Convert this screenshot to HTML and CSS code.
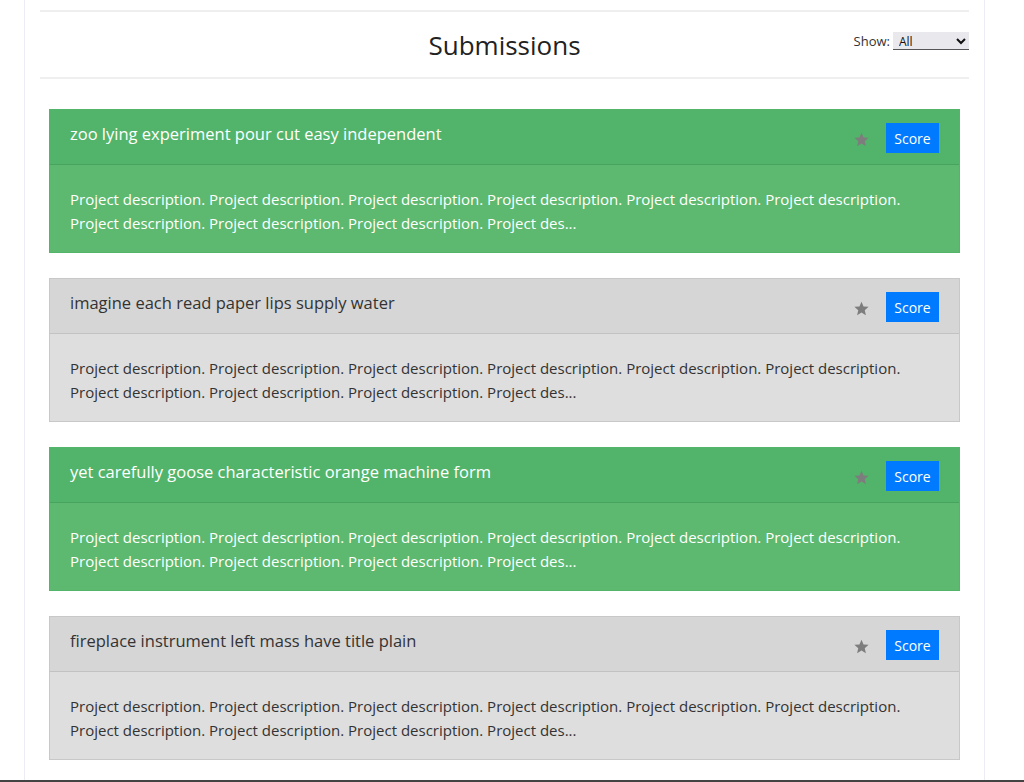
FILE: index.html
```html
<!DOCTYPE html>
<html>
<head>
<meta charset="utf-8">
<link rel="stylesheet" href="styles.css">
</head>
<body>
<div class="page">
  <div class="container">
    <div class="header">
      <h1 class="title">Submissions</h1>
      <div class="filter">
        <label for="show">Show:</label>
        <select id="show" class="select"><option>All</option></select>
      </div>
    </div>
    <div class="list">
      <div class="card green">
        <div class="card-head">
          <span class="card-title">zoo lying experiment pour cut easy independent</span>
          <div class="actions">
            <svg class="star" viewBox="0 0 24 24"><path d="M12 2.5l2.9 6.6 7.1.6-5.4 4.7 1.6 7-6.2-3.7-6.2 3.7 1.6-7L2 9.7l7.1-.6z"/></svg>
            <button class="btn">Score</button>
          </div>
        </div>
        <div class="card-body">Project description. Project description. Project description. Project description. Project description. Project description. Project description. Project description. Project description. Project des...</div>
      </div>
      <div class="card gray">
        <div class="card-head">
          <span class="card-title">imagine each read paper lips supply water</span>
          <div class="actions">
            <svg class="star" viewBox="0 0 24 24"><path d="M12 2.5l2.9 6.6 7.1.6-5.4 4.7 1.6 7-6.2-3.7-6.2 3.7 1.6-7L2 9.7l7.1-.6z"/></svg>
            <button class="btn">Score</button>
          </div>
        </div>
        <div class="card-body">Project description. Project description. Project description. Project description. Project description. Project description. Project description. Project description. Project description. Project des...</div>
      </div>
      <div class="card green">
        <div class="card-head">
          <span class="card-title">yet carefully goose characteristic orange machine form</span>
          <div class="actions">
            <svg class="star" viewBox="0 0 24 24"><path d="M12 2.5l2.9 6.6 7.1.6-5.4 4.7 1.6 7-6.2-3.7-6.2 3.7 1.6-7L2 9.7l7.1-.6z"/></svg>
            <button class="btn">Score</button>
          </div>
        </div>
        <div class="card-body">Project description. Project description. Project description. Project description. Project description. Project description. Project description. Project description. Project description. Project des...</div>
      </div>
      <div class="card gray">
        <div class="card-head">
          <span class="card-title">fireplace instrument left mass have title plain</span>
          <div class="actions">
            <svg class="star" viewBox="0 0 24 24"><path d="M12 2.5l2.9 6.6 7.1.6-5.4 4.7 1.6 7-6.2-3.7-6.2 3.7 1.6-7L2 9.7l7.1-.6z"/></svg>
            <button class="btn">Score</button>
          </div>
        </div>
        <div class="card-body">Project description. Project description. Project description. Project description. Project description. Project description. Project description. Project description. Project description. Project des...</div>
      </div>
    </div>
  </div>
</div>
</body>
</html>
```
FILE: styles.css
```css
html, body {
  margin: 0;
  padding: 0;
  background: #fff;
}
body {
  font-family: "Open Sans", "Noto Sans", sans-serif;
  color: #212529;
  height: 782px;
  overflow: hidden;
  box-sizing: border-box;
  border-bottom: 2px solid #444;
}
.page {
  height: 780px;
  overflow: hidden;
}
.container {
  margin-left: 24px;
  width: 961px;
  box-sizing: border-box;
  border-left: 1px solid #ececf4;
  border-right: 1px solid #ececf4;
  padding: 10px 15px 0 15px;
  min-height: 780px;
}
.header {
  position: relative;
  border-top: 2px solid #efefef;
  border-bottom: 2px solid #efefef;
  height: 65px;
  display: flex;
  align-items: center;
  justify-content: center;
}
.title {
  margin: 0;
  font-size: 26px;
  font-weight: 400;
  color: #222;
}
.filter {
  position: absolute;
  right: 0;
  top: 20px;
  display: flex;
  align-items: center;
  gap: 3px;
  font-size: 13px;
  color: #333;
}
.select {
  width: 76px;
  height: 18px;
  font-size: 12px;
  font-family: "Open Sans", sans-serif;
  border: none;
  border-bottom: 1px solid #555;
  background: #e9e9ed;
  padding: 0 2px;
  color: #111;
}
.list {
  padding: 30px 9px 0 9px;
  display: flex;
  flex-direction: column;
  gap: 25px;
}
.card {
  border: 1px solid #c8c8c8;
}
.card.green {
  border-color: #53b56a;
  color: #fff;
}
.card.green .card-head { background: #52b46a; border-bottom: 1px solid #48a35e; }
.card.green .card-body { background: #5cb96f; }
.card.gray .card-head { background: #d6d6d6; border-bottom: 1px solid #c2c2c2; color: #333; }
.card.gray .card-body { background: #dedede; color: #333; }
.card-head {
  height: 55px;
  display: flex;
  align-items: center;
  justify-content: space-between;
  padding: 0 20px;
  box-sizing: border-box;
}
.card-title {
  font-size: 16.5px;
  margin-top: -7px;
}
.actions {
  display: flex;
  align-items: center;
  gap: 16px;
  margin-top: 2px;
}
.star {
  width: 17px;
  height: 17px;
  fill: #7d7d7d;
  margin-top: 3px;
}
.btn {
  background: #007bff;
  color: #fff;
  border: none;
  width: 53px;
  height: 30px;
  font-family: "Open Sans", sans-serif;
  font-size: 14px;
  padding: 0;
}
.card-body {
  padding: 22px 20px 17px 20px;
  font-size: 15px;
  line-height: 24px;
  height: 87px;
  box-sizing: border-box;
}
```
